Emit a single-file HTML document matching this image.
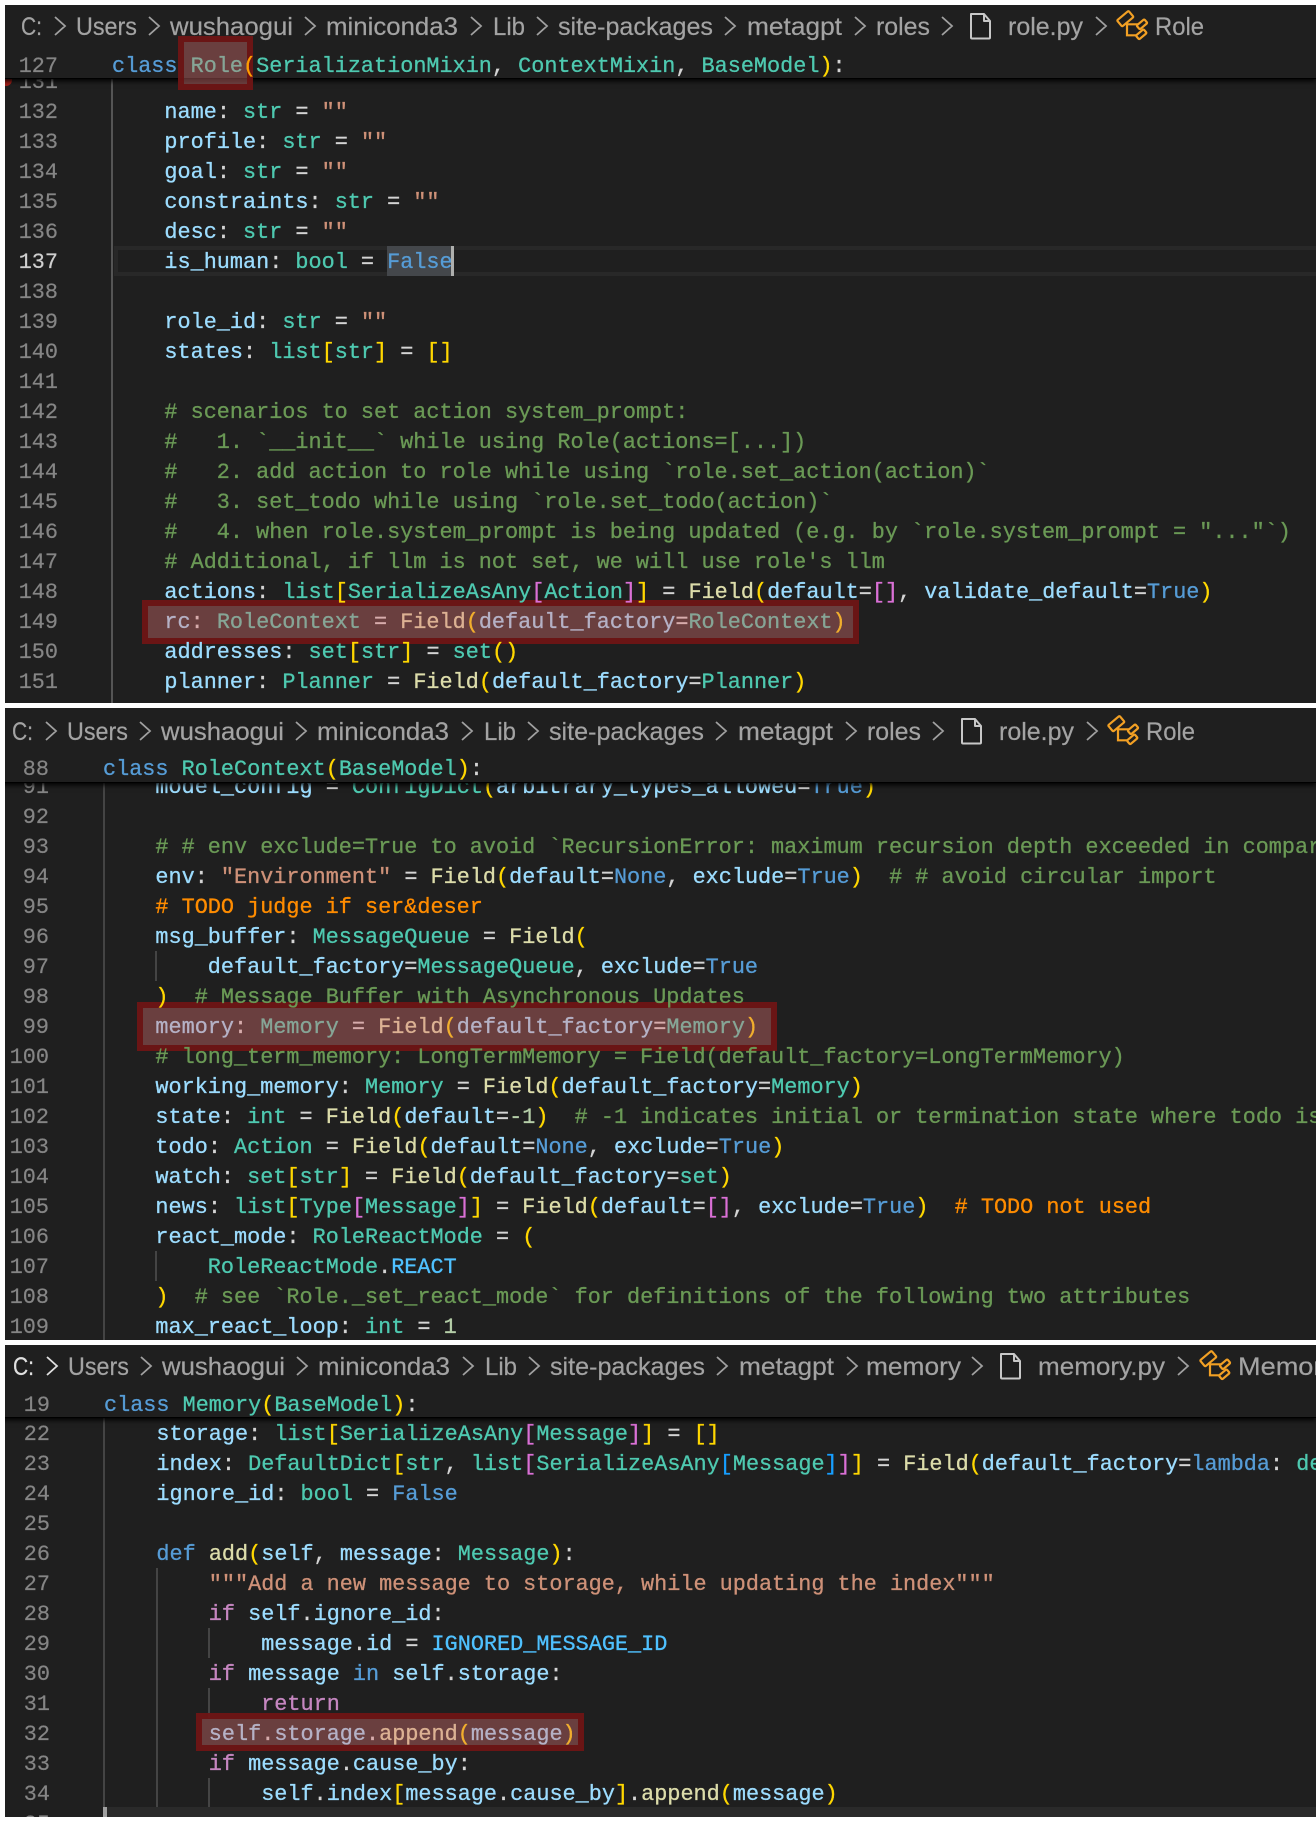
<!DOCTYPE html>
<html><head><meta charset="utf-8"><title>Code</title>
<style>
html,body{margin:0;padding:0;background:#fff}
body{position:relative;width:1316px;height:1822px;overflow:hidden}
.p{position:absolute;left:0;top:0;width:1316px;height:1822px;background:#1f1f1f;overflow:hidden}
.l,.m{position:absolute;height:30px;line-height:30px;margin-top:2px;font-family:"Liberation Mono",monospace;font-size:21.83px;white-space:pre;color:#d4d4d4;-webkit-text-stroke:.3px}
.m{width:60px;text-align:right;color:#858585;-webkit-text-stroke:.2px}
.g{position:absolute;width:2px;background:#444}
.bar{position:absolute;left:0;width:1316px;background:#1f1f1f;box-shadow:0 1px 0 #000,0 3px 5px #000}
.h{position:absolute;box-sizing:border-box;border:6px solid rgba(106,18,18,.93);background:rgba(221,113,113,.4)}
svg{position:absolute;left:0;top:0}
svg text{font-family:"Liberation Sans",sans-serif;font-size:25px;fill:#a3a3a3;stroke:#a3a3a3;stroke-width:.2px}
b{font-weight:normal}
.k{color:#569cd6}.t{color:#4ec9b0}.v{color:#9cdcfe}.s{color:#ce9178}.f{color:#dcdcaa}.c{color:#6a9955}
.y{color:#ffd700}.q{color:#da70d6}.e{color:#179fff}.n{color:#b5cea8}.r{color:#c586c0}.d{color:#ff8c00}.u{color:#4fc1ff}
</style></head><body>

<div class="p" style="clip-path:inset(5px 0 1119px 5px)">
<div class="g" style="left:111px;top:78px;height:625px;background:#555"></div>
<div style="position:absolute;left:114px;top:246px;right:0;height:30px;box-sizing:border-box;border:4px solid #282828;border-right:0"></div>
<div style="position:absolute;left:387px;top:246px;width:64px;height:30px;background:#44474b"></div>
<div class="m" style="left:-2px;top:66px">131</div>
<div class="m" style="left:-2px;top:96px">132</div><div class="l" style="left:112px;top:96px">    <b class="v">name</b>: <b class="t">str</b> = <b class="s">""</b></div>
<div class="m" style="left:-2px;top:126px">133</div><div class="l" style="left:112px;top:126px">    <b class="v">profile</b>: <b class="t">str</b> = <b class="s">""</b></div>
<div class="m" style="left:-2px;top:156px">134</div><div class="l" style="left:112px;top:156px">    <b class="v">goal</b>: <b class="t">str</b> = <b class="s">""</b></div>
<div class="m" style="left:-2px;top:186px">135</div><div class="l" style="left:112px;top:186px">    <b class="v">constraints</b>: <b class="t">str</b> = <b class="s">""</b></div>
<div class="m" style="left:-2px;top:216px">136</div><div class="l" style="left:112px;top:216px">    <b class="v">desc</b>: <b class="t">str</b> = <b class="s">""</b></div>
<div class="m" style="left:-2px;top:246px;color:#cfcfcf">137</div><div class="l" style="left:112px;top:246px">    <b class="v">is_human</b>: <b class="t">bool</b> = <b class="k">False</b></div>
<div style="position:absolute;left:451px;top:246px;width:3px;height:30px;background:#aeafad"></div>
<div class="m" style="left:-2px;top:276px">138</div>
<div class="m" style="left:-2px;top:306px">139</div><div class="l" style="left:112px;top:306px">    <b class="v">role_id</b>: <b class="t">str</b> = <b class="s">""</b></div>
<div class="m" style="left:-2px;top:336px">140</div><div class="l" style="left:112px;top:336px">    <b class="v">states</b>: <b class="t">list</b><b class="y">[</b><b class="t">str</b><b class="y">]</b> = <b class="y">[]</b></div>
<div class="m" style="left:-2px;top:366px">141</div>
<div class="m" style="left:-2px;top:396px">142</div><div class="l c" style="left:112px;top:396px">    # scenarios to set action system_prompt:</div>
<div class="m" style="left:-2px;top:426px">143</div><div class="l c" style="left:112px;top:426px">    #   1. `__init__` while using Role(actions=[...])</div>
<div class="m" style="left:-2px;top:456px">144</div><div class="l c" style="left:112px;top:456px">    #   2. add action to role while using `role.set_action(action)`</div>
<div class="m" style="left:-2px;top:486px">145</div><div class="l c" style="left:112px;top:486px">    #   3. set_todo while using `role.set_todo(action)`</div>
<div class="m" style="left:-2px;top:516px">146</div><div class="l c" style="left:112px;top:516px">    #   4. when role.system_prompt is being updated (e.g. by `role.system_prompt = "..."`)</div>
<div class="m" style="left:-2px;top:546px">147</div><div class="l c" style="left:112px;top:546px">    # Additional, if llm is not set, we will use role's llm</div>
<div class="m" style="left:-2px;top:576px">148</div>
<div class="m" style="left:-2px;top:606px">149</div><div class="l" style="left:112px;top:606px">    <b class="v">rc</b>: <b class="t">RoleContext</b> = <b class="f">Field</b><b class="y">(</b><b class="v">default_factory</b>=<b class="t">RoleContext</b><b class="y">)</b></div>
<div class="m" style="left:-2px;top:636px">150</div>
<div class="m" style="left:-2px;top:666px">151</div><div class="l" style="left:112px;top:666px">    <b class="v">planner</b>: <b class="t">Planner</b> = <b class="f">Field</b><b class="y">(</b><b class="v">default_factory</b>=<b class="t">Planner</b><b class="y">)</b></div>
<div style="position:absolute;left:0;top:74px;width:12px;height:12px;border-radius:6px;background:#a5201a;z-index:0"></div>
<div class="bar" style="top:0;height:78px"></div>
<div class="m" style="left:-2px;top:50px">127</div>
<div class="l" style="left:112px;top:50px"><b class="k">class</b> <b class="t">Role</b><b class="y">(</b><b class="t">SerializationMixin</b>, <b class="t">ContextMixin</b>, <b class="t">BaseModel</b><b class="y">)</b>:</div>
<svg width="1316" height="1822" viewBox="0 0 1316 1822">
<text x="21" y="35" textLength="21" lengthAdjust="spacingAndGlyphs">C:</text>
<text x="76" y="35" textLength="61" lengthAdjust="spacingAndGlyphs">Users</text>
<text x="170" y="35" textLength="123" lengthAdjust="spacingAndGlyphs">wushaogui</text>
<text x="326" y="35" textLength="132" lengthAdjust="spacingAndGlyphs">miniconda3</text>
<text x="493" y="35" textLength="32" lengthAdjust="spacingAndGlyphs">Lib</text>
<text x="558" y="35" textLength="155" lengthAdjust="spacingAndGlyphs">site-packages</text>
<text x="747" y="35" textLength="95" lengthAdjust="spacingAndGlyphs">metagpt</text>
<text x="876" y="35" textLength="54" lengthAdjust="spacingAndGlyphs">roles</text>
<text x="1008" y="35" textLength="75" lengthAdjust="spacingAndGlyphs">role.py</text>
<text x="1155" y="35" textLength="49" lengthAdjust="spacingAndGlyphs">Role</text>
<path fill="none" stroke="#a0a0a0" stroke-width="1.8" d="M55 17l10 9-10 9M149 17l10 9-10 9M305 17l10 9-10 9M471 17l10 9-10 9M537 17l10 9-10 9M725 17l10 9-10 9M855 17l10 9-10 9M942 17l10 9-10 9M1096 17l10 9-10 9"/>
<path fill="none" stroke="#c8c8c8" stroke-width="2" stroke-linejoin="round" d="M971 14h13l6 7v16.500q0 1-1 1h-17q-1 0-1-1zM984 14v7h6"/>
<g transform="translate(1119,12)" fill="none" stroke="#f2a024" stroke-width="2.200">
<rect x="-1.200" y="2.700" width="15" height="8" rx="1" transform="rotate(-40 6.300 6.700)"/>
<rect x="18" y="9.800" width="10" height="5" rx="1" transform="rotate(-40 23 12.300)"/>
<rect x="17.300" y="19.800" width="10" height="5" rx="1" transform="rotate(-40 22.300 22.300)"/>
<path d="M8 11V23.300H18M8 12.300H19"/></g>
</svg>
<div class="h" style="left:178px;top:36px;width:75px;height:54px"></div>
<div class="l" style="left:112px;top:50px;color:#ff9d00">          (</div>
<div class="h" style="left:142px;top:600px;width:717px;height:44px"></div>
<div class="l" style="left:112px;top:576px">    <b class="v">actions</b>: <b class="t">list</b><b class="y">[</b><b class="t">SerializeAsAny</b><b class="q">[</b><b class="t">Action</b><b class="q">]</b><b class="y">]</b> = <b class="f">Field</b><b class="y">(</b><b class="v">default</b>=<b class="q">[]</b>, <b class="v">validate_default</b>=<b class="k">True</b><b class="y">)</b></div>
<div class="l" style="left:112px;top:636px">    <b class="v">addresses</b>: <b class="t">set</b><b class="y">[</b><b class="t">str</b><b class="y">]</b> = <b class="t">set</b><b class="y">()</b></div>
</div>

<div class="p" style="clip-path:inset(708px 0 482px 5px)">
<div class="g" style="left:103px;top:782px;height:558px"></div>
<div class="g" style="left:155px;top:951px;height:30px"></div>
<div class="g" style="left:155px;top:1251px;height:30px"></div>
<div class="m" style="left:-11px;top:771px">91</div><div class="l" style="left:103px;top:771px">    <b class="v">model_config</b> = <b class="t">ConfigDict</b><b class="y">(</b><b class="v">arbitrary_types_allowed</b>=<b class="k">True</b><b class="y">)</b></div>
<div class="m" style="left:-11px;top:801px">92</div>
<div class="m" style="left:-11px;top:831px">93</div><div class="l c" style="left:103px;top:831px">    # # env exclude=True to avoid `RecursionError: maximum recursion depth exceeded in comparison`</div>
<div class="m" style="left:-11px;top:861px">94</div><div class="l" style="left:103px;top:861px">    <b class="v">env</b>: <b class="s">"Environment"</b> = <b class="f">Field</b><b class="y">(</b><b class="v">default</b>=<b class="k">None</b>, <b class="v">exclude</b>=<b class="k">True</b><b class="y">)</b>  <b class="c"># # avoid circular import</b></div>
<div class="m" style="left:-11px;top:891px">95</div><div class="l d" style="left:103px;top:891px">    # TODO judge if ser&amp;deser</div>
<div class="m" style="left:-11px;top:921px">96</div><div class="l" style="left:103px;top:921px">    <b class="v">msg_buffer</b>: <b class="t">MessageQueue</b> = <b class="f">Field</b><b class="y">(</b></div>
<div class="m" style="left:-11px;top:951px">97</div><div class="l" style="left:103px;top:951px">        <b class="v">default_factory</b>=<b class="t">MessageQueue</b>, <b class="v">exclude</b>=<b class="k">True</b></div>
<div class="m" style="left:-11px;top:981px">98</div>
<div class="m" style="left:-11px;top:1011px">99</div><div class="l" style="left:103px;top:1011px">    <b class="v">memory</b>: <b class="t">Memory</b> = <b class="f">Field</b><b class="y">(</b><b class="v">default_factory</b>=<b class="t">Memory</b><b class="y">)</b></div>
<div class="m" style="left:-11px;top:1041px">100</div>
<div class="m" style="left:-11px;top:1071px">101</div><div class="l" style="left:103px;top:1071px">    <b class="v">working_memory</b>: <b class="t">Memory</b> = <b class="f">Field</b><b class="y">(</b><b class="v">default_factory</b>=<b class="t">Memory</b><b class="y">)</b></div>
<div class="m" style="left:-11px;top:1101px">102</div><div class="l" style="left:103px;top:1101px">    <b class="v">state</b>: <b class="t">int</b> = <b class="f">Field</b><b class="y">(</b><b class="v">default</b>=<b class="n">-1</b><b class="y">)</b>  <b class="c"># -1 indicates initial or termination state where todo is empty</b></div>
<div class="m" style="left:-11px;top:1131px">103</div><div class="l" style="left:103px;top:1131px">    <b class="v">todo</b>: <b class="t">Action</b> = <b class="f">Field</b><b class="y">(</b><b class="v">default</b>=<b class="k">None</b>, <b class="v">exclude</b>=<b class="k">True</b><b class="y">)</b></div>
<div class="m" style="left:-11px;top:1161px">104</div><div class="l" style="left:103px;top:1161px">    <b class="v">watch</b>: <b class="t">set</b><b class="y">[</b><b class="t">str</b><b class="y">]</b> = <b class="f">Field</b><b class="y">(</b><b class="v">default_factory</b>=<b class="t">set</b><b class="y">)</b></div>
<div class="m" style="left:-11px;top:1191px">105</div><div class="l" style="left:103px;top:1191px">    <b class="v">news</b>: <b class="t">list</b><b class="y">[</b><b class="t">Type</b><b class="q">[</b><b class="t">Message</b><b class="q">]</b><b class="y">]</b> = <b class="f">Field</b><b class="y">(</b><b class="v">default</b>=<b class="q">[]</b>, <b class="v">exclude</b>=<b class="k">True</b><b class="y">)</b>  <b class="d"># TODO not used</b></div>
<div class="m" style="left:-11px;top:1221px">106</div><div class="l" style="left:103px;top:1221px">    <b class="v">react_mode</b>: <b class="t">RoleReactMode</b> = <b class="y">(</b></div>
<div class="m" style="left:-11px;top:1251px">107</div><div class="l" style="left:103px;top:1251px">        <b class="t">RoleReactMode</b>.<b class="u">REACT</b></div>
<div class="m" style="left:-11px;top:1281px">108</div><div class="l" style="left:103px;top:1281px">    <b class="y">)</b>  <b class="c"># see `Role._set_react_mode` for definitions of the following two attributes</b></div>
<div class="m" style="left:-11px;top:1311px">109</div><div class="l" style="left:103px;top:1311px">    <b class="v">max_react_loop</b>: <b class="t">int</b> = <b class="n">1</b></div>
<div class="bar" style="top:700px;height:82px"></div>
<div class="m" style="left:-11px;top:753px">88</div>
<div class="l" style="left:103px;top:753px"><b class="k">class</b> <b class="t">RoleContext</b><b class="y">(</b><b class="t">BaseModel</b><b class="y">)</b>:</div>
<svg width="1316" height="1822" viewBox="0 0 1316 1822"><g transform="translate(-9,705)">
<text x="21" y="35" textLength="21" lengthAdjust="spacingAndGlyphs">C:</text>
<text x="76" y="35" textLength="61" lengthAdjust="spacingAndGlyphs">Users</text>
<text x="170" y="35" textLength="123" lengthAdjust="spacingAndGlyphs">wushaogui</text>
<text x="326" y="35" textLength="132" lengthAdjust="spacingAndGlyphs">miniconda3</text>
<text x="493" y="35" textLength="32" lengthAdjust="spacingAndGlyphs">Lib</text>
<text x="558" y="35" textLength="155" lengthAdjust="spacingAndGlyphs">site-packages</text>
<text x="747" y="35" textLength="95" lengthAdjust="spacingAndGlyphs">metagpt</text>
<text x="876" y="35" textLength="54" lengthAdjust="spacingAndGlyphs">roles</text>
<text x="1008" y="35" textLength="75" lengthAdjust="spacingAndGlyphs">role.py</text>
<text x="1155" y="35" textLength="49" lengthAdjust="spacingAndGlyphs">Role</text>
<path fill="none" stroke="#a0a0a0" stroke-width="1.8" d="M55 17l10 9-10 9M149 17l10 9-10 9M305 17l10 9-10 9M471 17l10 9-10 9M537 17l10 9-10 9M725 17l10 9-10 9M855 17l10 9-10 9M942 17l10 9-10 9M1096 17l10 9-10 9"/>
<path fill="none" stroke="#c8c8c8" stroke-width="2" stroke-linejoin="round" d="M971 14h13l6 7v16.500q0 1-1 1h-17q-1 0-1-1zM984 14v7h6"/>
<g transform="translate(1119,12)" fill="none" stroke="#f2a024" stroke-width="2.200">
<rect x="-1.200" y="2.700" width="15" height="8" rx="1" transform="rotate(-40 6.300 6.700)"/>
<rect x="18" y="9.800" width="10" height="5" rx="1" transform="rotate(-40 23 12.300)"/>
<rect x="17.300" y="19.800" width="10" height="5" rx="1" transform="rotate(-40 22.300 22.300)"/>
<path d="M8 11V23.300H18M8 12.300H19"/></g>
</g></svg>
<div class="h" style="left:137px;top:1002px;width:640px;height:49px"></div>
<div class="l" style="left:103px;top:981px">    <b class="y">)</b>  <b class="c"># Message Buffer with Asynchronous Updates</b></div>
<div class="l c" style="left:103px;top:1041px">    # long_term_memory: LongTermMemory = Field(default_factory=LongTermMemory)</div>
</div>

<div class="p" style="clip-path:inset(1345px 0 5px 5px)">
<div class="g" style="left:103px;top:1417px;height:400px"></div>
<div class="g" style="left:156px;top:1568px;height:240px"></div>
<div class="g" style="left:208px;top:1628px;height:30px"></div>
<div class="g" style="left:208px;top:1688px;height:30px"></div>
<div class="g" style="left:208px;top:1778px;height:30px"></div>
<div style="position:absolute;left:104px;top:1807px;right:0;height:10px;background:#2a2a2a"></div>
<div style="position:absolute;left:103px;top:1807px;width:4px;height:10px;background:#a0a0a0"></div>
<div class="m" style="left:-10px;top:1418px">22</div><div class="l" style="left:104px;top:1418px">    <b class="v">storage</b>: <b class="t">list</b><b class="y">[</b><b class="t">SerializeAsAny</b><b class="q">[</b><b class="t">Message</b><b class="q">]</b><b class="y">]</b> = <b class="y">[]</b></div>
<div class="m" style="left:-10px;top:1448px">23</div><div class="l" style="left:104px;top:1448px">    <b class="v">index</b>: <b class="t">DefaultDict</b><b class="y">[</b><b class="t">str</b>, <b class="t">list</b><b class="q">[</b><b class="t">SerializeAsAny</b><b class="e">[</b><b class="t">Message</b><b class="e">]</b><b class="q">]</b><b class="y">]</b> = <b class="f">Field</b><b class="y">(</b><b class="v">default_factory</b>=<b class="k">lambda</b>: <b class="t">defaultdict</b><b class="q">(</b><b class="t">list</b><b class="q">)</b><b class="y">)</b></div>
<div class="m" style="left:-10px;top:1478px">24</div><div class="l" style="left:104px;top:1478px">    <b class="v">ignore_id</b>: <b class="t">bool</b> = <b class="k">False</b></div>
<div class="m" style="left:-10px;top:1508px">25</div>
<div class="m" style="left:-10px;top:1538px">26</div><div class="l" style="left:104px;top:1538px">    <b class="k">def</b> <b class="f">add</b><b class="y">(</b><b class="v">self</b>, <b class="v">message</b>: <b class="t">Message</b><b class="y">)</b>:</div>
<div class="m" style="left:-10px;top:1568px">27</div><div class="l s" style="left:104px;top:1568px">        """Add a new message to storage, while updating the index"""</div>
<div class="m" style="left:-10px;top:1598px">28</div><div class="l" style="left:104px;top:1598px">        <b class="r">if</b> <b class="v">self</b>.<b class="v">ignore_id</b>:</div>
<div class="m" style="left:-10px;top:1628px">29</div><div class="l" style="left:104px;top:1628px">            <b class="v">message</b>.<b class="v">id</b> = <b class="u">IGNORED_MESSAGE_ID</b></div>
<div class="m" style="left:-10px;top:1658px">30</div><div class="l" style="left:104px;top:1658px">        <b class="r">if</b> <b class="v">message</b> <b class="k">in</b> <b class="v">self</b>.<b class="v">storage</b>:</div>
<div class="m" style="left:-10px;top:1688px">31</div><div class="l" style="left:104px;top:1688px">            <b class="r">return</b></div>
<div class="m" style="left:-10px;top:1718px">32</div><div class="l" style="left:104px;top:1718px">        <b class="v">self</b>.<b class="v">storage</b>.<b class="f">append</b><b class="y">(</b><b class="v">message</b><b class="y">)</b></div>
<div class="m" style="left:-10px;top:1748px">33</div><div class="l" style="left:104px;top:1748px">        <b class="r">if</b> <b class="v">message</b>.<b class="v">cause_by</b>:</div>
<div class="m" style="left:-10px;top:1778px">34</div><div class="l" style="left:104px;top:1778px">            <b class="v">self</b>.<b class="v">index</b><b class="y">[</b><b class="v">message</b>.<b class="v">cause_by</b><b class="y">]</b>.<b class="f">append</b><b class="y">(</b><b class="v">message</b><b class="y">)</b></div>
<div class="m" style="left:-10px;top:1808px">35</div>
<div class="bar" style="top:1340px;height:77px"></div>
<div class="m" style="left:-10px;top:1389px">19</div>
<div class="l" style="left:104px;top:1389px"><b class="k">class</b> <b class="t">Memory</b><b class="y">(</b><b class="t">BaseModel</b><b class="y">)</b>:</div>
<svg width="1316" height="1822" viewBox="0 0 1316 1822"><g transform="translate(0,1340)">
<text x="13" y="35" textLength="21" lengthAdjust="spacingAndGlyphs" style="fill:#e0e0e0;stroke:#e0e0e0">C:</text>
<text x="68" y="35" textLength="61" lengthAdjust="spacingAndGlyphs">Users</text>
<text x="162" y="35" textLength="123" lengthAdjust="spacingAndGlyphs">wushaogui</text>
<text x="318" y="35" textLength="132" lengthAdjust="spacingAndGlyphs">miniconda3</text>
<text x="485" y="35" textLength="32" lengthAdjust="spacingAndGlyphs">Lib</text>
<text x="550" y="35" textLength="155" lengthAdjust="spacingAndGlyphs">site-packages</text>
<text x="739" y="35" textLength="95" lengthAdjust="spacingAndGlyphs">metagpt</text>
<text x="866" y="35" textLength="95" lengthAdjust="spacingAndGlyphs">memory</text>
<text x="1038" y="35" textLength="127" lengthAdjust="spacingAndGlyphs">memory.py</text>
<text x="1238" y="35" textLength="98" lengthAdjust="spacingAndGlyphs">Memory</text>
<path fill="none" stroke="#e0e0e0" stroke-width="1.8" d="M47 17l10 9-10 9"/>
<path fill="none" stroke="#a0a0a0" stroke-width="1.8" d="M141 17l10 9-10 9M297 17l10 9-10 9M463 17l10 9-10 9M529 17l10 9-10 9M717 17l10 9-10 9M847 17l10 9-10 9M972 17l10 9-10 9M1178 17l10 9-10 9"/>
<path fill="none" stroke="#c8c8c8" stroke-width="2" stroke-linejoin="round" d="M1001 14h13l6 7v16.500q0 1-1 1h-17q-1 0-1-1zM1014 14v7h6"/>
<g transform="translate(1202,12)" fill="none" stroke="#f2a024" stroke-width="2.200">
<rect x="-1.200" y="2.700" width="15" height="8" rx="1" transform="rotate(-40 6.300 6.700)"/>
<rect x="18" y="9.800" width="10" height="5" rx="1" transform="rotate(-40 23 12.300)"/>
<rect x="17.300" y="19.800" width="10" height="5" rx="1" transform="rotate(-40 22.300 22.300)"/>
<path d="M8 11V23.300H18M8 12.300H19"/></g>
</g></svg>
<div class="h" style="left:196px;top:1713px;width:388px;height:38px"></div>
</div>
</body></html>
